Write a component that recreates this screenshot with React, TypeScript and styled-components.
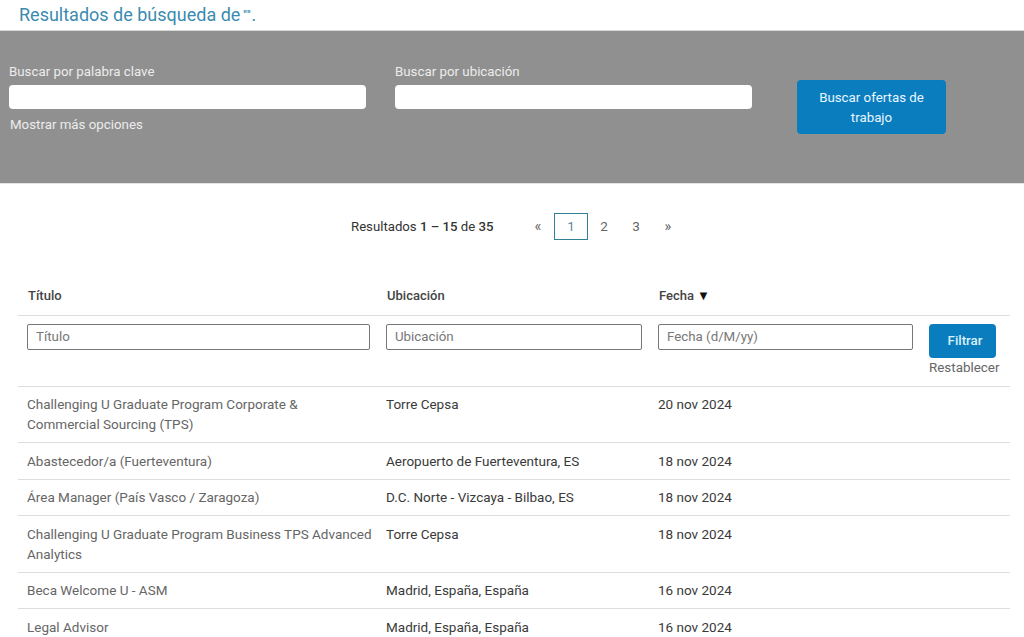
import React from 'react';
import styled, { createGlobalStyle } from 'styled-components';

const GlobalStyle = createGlobalStyle`
  html, body {
    margin: 0;
    padding: 0;
    height: 637px;
    overflow: hidden;
    background: #fff;
    font-family: Roboto, "Liberation Sans", sans-serif;
    font-size: 13.5px;
    color: #555;
  }
`

const Heading = styled.h1`
  margin: 0;
  height: 30px;
  padding-left: 19px;
  font-size: 18px;
  line-height: 30px;
  font-weight: 400;
  color: #3a8bb0;
`

const TinyQuotes = styled.span`
  font-size: 10px;
  font-weight: 700;
  letter-spacing: 1px;
  vertical-align: 3px;
  margin-left: 3px;
`

const SearchBand = styled.form`
  height: 154px;
  box-sizing: border-box;
  background: #909090;
  border-top: 1px solid #d8d8d8;
  border-bottom: 1px solid #e4e4e4;
  padding: 32px 0 0 9px;
  display: flex;
  align-items: flex-start;
`

const Field = styled.div`
  width: 357px;
  margin-right: 29px;
`

const FieldLabel = styled.label`
  display: block;
  color: #ececec;
  font-size: 13.3px;
  line-height: 17px;
  margin-bottom: 5px;
`

const SearchInput = styled.input`
  display: block;
  width: 100%;
  height: 24px;
  box-sizing: border-box;
  background: #fff;
  border: 0;
  border-radius: 4px;
`

const MoreOptions = styled.div`
  color: #ececec;
  font-size: 13.3px;
  line-height: 17px;
  margin: 7px 0 0 1px;
`

const SearchButton = styled.button`
  width: 149px;
  height: 54px;
  margin: 17px 0 0 16px;
  background: #0a7dbf;
  color: #e8f6ff;
  border: 0;
  border-radius: 4px;
  font: inherit;
  font-size: 13.3px;
  line-height: 20px;
  padding: 1px 18px 0;
`

const Pager = styled.div`
  display: flex;
  align-items: center;
  height: 28px;
  margin-top: 28px;
  padding-left: 351px;
  color: #333;
`

const Summary = styled.div`
  width: 171px;
  font-size: 13.2px;
  color: #333;

  b {
    font-weight: 500;
  }
`

const PageItem = styled.span<{ $active?: boolean; $arrow?: boolean }>`
  width: ${p => (p.$active ? 34 : 32)}px;
  height: 27px;
  display: flex;
  align-items: center;
  justify-content: center;
  box-sizing: border-box;
  font-size: ${p => (p.$arrow ? 14.5 : 13.5)}px;
  color: ${p => (p.$active ? '#5f87a8' : '#666')};
  border: ${p => (p.$active ? '1px solid #2f8296' : '0')};
`

const Table = styled.table`
  width: 992px;
  margin: 41px 0 0 18px;
  border-collapse: collapse;
  table-layout: fixed;
`

const HeadCell = styled.th`
  height: 34px;
  box-sizing: border-box;
  padding: 0 0 4px 10px;
  text-align: left;
  vertical-align: middle;
  font-size: 13px;
  font-weight: 500;
  color: #444;
  border-bottom: 1px solid #ddd;
`

const SortArrow = styled.span`
  color: #111;
  font-size: 13px;
  margin-left: 3px;
`

const FilterCell = styled.td<{ $right?: number }>`
  height: 71px;
  box-sizing: border-box;
  padding: 8px ${p => p.$right ?? 7}px 0 9px;
  vertical-align: top;
  border-bottom: 1px solid #ddd;
`

const FilterInput = styled.input`
  display: block;
  width: 100%;
  height: 26px;
  box-sizing: border-box;
  padding: 0 8px;
  border: 1px solid #777;
  border-radius: 2px;
  background: #fff;
  font: inherit;
  font-size: 13.3px;
  color: #555;

  &::placeholder {
    color: #777;
    opacity: 1;
  }
`

const FilterButton = styled.button`
  display: block;
  width: 67px;
  height: 34px;
  background: #0a7dbf;
  color: #d9f0fb;
  border: 0;
  border-radius: 4px;
  font: inherit;
  font-size: 13.3px;
  font-weight: 500;
  padding: 0 0 0 5px;
`

const ResetLink = styled.div`
  font-size: 13.4px;
  line-height: 18px;
  margin-top: 1px;
  color: #666;
  white-space: nowrap;
`

const Row = styled.tr`
  border-bottom: 1px solid #ddd;
`

const Cell = styled.td<{ $strong?: boolean }>`
  padding: 7.5px 4px 8px 9px;
  vertical-align: top;
  font-size: 13.5px;
  line-height: 20px;
  color: ${p => (p.$strong ? '#3a3a3a' : '#666')};
`

const jobs = [
  { title: 'Challenging U Graduate Program Corporate & Commercial Sourcing (TPS)', place: 'Torre Cepsa', date: '20 nov 2024' },
  { title: 'Abastecedor/a (Fuerteventura)', place: 'Aeropuerto de Fuerteventura, ES', date: '18 nov 2024' },
  { title: 'Área Manager (País Vasco / Zaragoza)', place: 'D.C. Norte - Vizcaya - Bilbao, ES', date: '18 nov 2024' },
  { title: 'Challenging U Graduate Program Business TPS Advanced Analytics', place: 'Torre Cepsa', date: '18 nov 2024' },
  { title: 'Beca Welcome U - ASM', place: 'Madrid, España, España', date: '16 nov 2024' },
  { title: 'Legal Advisor', place: 'Madrid, España, España', date: '16 nov 2024' },
];

function App() {
  return (
    <>
      <GlobalStyle />
      <Heading>Resultados de búsqueda de<TinyQuotes>""</TinyQuotes>.</Heading>
      <SearchBand onSubmit={e => e.preventDefault()}>
        <Field>
          <FieldLabel>Buscar por palabra clave</FieldLabel>
          <SearchInput />
          <MoreOptions>Mostrar más opciones</MoreOptions>
        </Field>
        <Field>
          <FieldLabel>Buscar por ubicación</FieldLabel>
          <SearchInput />
        </Field>
        <SearchButton>Buscar ofertas de trabajo</SearchButton>
      </SearchBand>
      <Pager>
        <Summary>Resultados <b>1 – 15</b> de <b>35</b></Summary>
        <PageItem $arrow>«</PageItem>
        <PageItem $active>1</PageItem>
        <PageItem>2</PageItem>
        <PageItem>3</PageItem>
        <PageItem $arrow>»</PageItem>
      </Pager>
      <Table>
        <colgroup>
          <col style={{ width: 359 }} />
          <col style={{ width: 272 }} />
          <col style={{ width: 271 }} />
          <col />
        </colgroup>
        <thead>
          <tr>
            <HeadCell>Título</HeadCell>
            <HeadCell>Ubicación</HeadCell>
            <HeadCell>Fecha<SortArrow>▼</SortArrow></HeadCell>
            <HeadCell />
          </tr>
          <tr>
            <FilterCell><FilterInput placeholder="Título" /></FilterCell>
            <FilterCell><FilterInput placeholder="Ubicación" /></FilterCell>
            <FilterCell><FilterInput placeholder="Fecha (d/M/yy)" /></FilterCell>
            <FilterCell $right={0}>
              <FilterButton>Filtrar</FilterButton>
              <ResetLink>Restablecer</ResetLink>
            </FilterCell>
          </tr>
        </thead>
        <tbody>
          {jobs.map(job => (
            <Row key={job.title}>
              <Cell>{job.title}</Cell>
              <Cell $strong>{job.place}</Cell>
              <Cell $strong>{job.date}</Cell>
              <Cell />
            </Row>
          ))}
        </tbody>
      </Table>
    </>
  );
}

export default App;
